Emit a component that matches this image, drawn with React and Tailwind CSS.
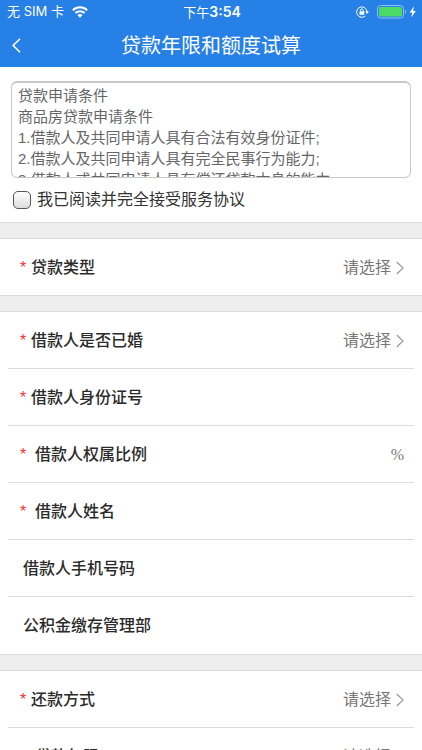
import React, { useState } from "react";

const TERMS = `贷款申请条件
商品房贷款申请条件
1.借款人及共同申请人具有合法有效身份证件;
2.借款人及共同申请人具有完全民事行为能力;
3.借款人或共同申请人具有偿还贷款本息的能力;`;

// kind: "select" | "text"
const SECTIONS = [
  [{ id: "loanType", label: "贷款类型", required: true, kind: "select" }],
  [
    { id: "married", label: "借款人是否已婚", required: true, kind: "select" },
    { id: "idNumber", label: "借款人身份证号", required: true, kind: "text" },
    { id: "share", label: "借款人权属比例", required: true, wide: true, kind: "text", unit: "%" },
    { id: "name", label: "借款人姓名", required: true, wide: true, kind: "text" },
    { id: "phone", label: "借款人手机号码", kind: "text" },
    { id: "office", label: "公积金缴存管理部", kind: "text" },
  ],
  [
    { id: "repayment", label: "还款方式", required: true, kind: "select" },
    { id: "years", label: "贷款年限", required: true, wide: true, kind: "select" },
  ],
];

function StatusBar() {
  return (
    <div className="flex h-6 items-center pr-[5px] pl-[7px] font-['Inter','Noto_Sans_CJK_SC',sans-serif] text-[13px]">
      <div className="flex flex-1 items-center gap-2">
        <span>无 SIM 卡</span>
        <svg width="16" height="12" viewBox="0 0 16 12" fill="none" stroke="currentColor" strokeWidth="2">
          <path d="M0.8 4.3a10.3 10.3 0 0 1 14.4 0" />
          <path d="M3.4 7a6.6 6.6 0 0 1 9.2 0" />
          <path d="M8 11.8 5.4 9.1a3.8 3.8 0 0 1 5.2 0z" fill="currentColor" stroke="none" />
        </svg>
      </div>
      <span>
        下午<span className="text-sm font-semibold">3:54</span>
      </span>
      <div className="flex flex-1 items-center justify-end gap-2">
        {/* rotation lock */}
        <svg width="13" height="12" viewBox="0 0 13 12" fill="none" stroke="currentColor">
          <path d="M9.3 10A5.2 5.2 0 1 1 11 5.4" />
          <path d="M9.2 5.3h3.7L11 8z" fill="currentColor" stroke="none" />
          <rect x="3.5" y="5.2" width="4.8" height="3.6" rx="0.5" fill="currentColor" stroke="none" />
          <path d="M4.5 5.5V4.4a1.4 1.4 0 0 1 2.8 0v1.1" />
        </svg>
        {/* battery + charging bolt */}
        <svg width="40" height="14" viewBox="0 0 40 14">
          <rect x="0.5" y="0.5" width="26" height="12.5" rx="3" fill="none" stroke="#8fc0f5" />
          <rect x="2" y="2" width="23" height="9.5" rx="1.5" fill="#4cd964" />
          <path d="M28 4.8v4a2.3 2.3 0 0 0 0-4z" fill="#8fc0f5" />
          <path d="M37 1.2 32.6 7.6h2.6l-1 4.9L38.8 6h-2.7z" fill="#fff" />
        </svg>
      </div>
    </div>
  );
}

function Chevron() {
  return (
    <svg width="8" height="14" viewBox="0 0 8 14" fill="none" stroke="#999" strokeWidth="1.2">
      <path d="M0.8 1 7 7 0.8 13" />
    </svg>
  );
}

function Field({ field }) {
  const { id, label, required, wide, kind, unit } = field;
  return (
    <div className="mx-2 flex h-[57px] items-center border-b border-[#dcdcdc] pt-0.5 pr-2.5 pl-3 last:border-transparent only:h-14">
      <label htmlFor={id} className="flex shrink-0 items-center font-medium text-[#2b2b2b]">
        <span className={wide ? "w-[15px] text-[#f03434]" : required ? "w-[11px] text-[#f03434]" : "w-[3px]"}>
          {required && "*"}
        </span>
        {label}
      </label>
      {kind === "select" ? (
        <div className="flex flex-1 items-center justify-end gap-1">
          <select id={id} className="appearance-none bg-transparent text-[#777] outline-none">
            <option>请选择</option>
          </select>
          <Chevron />
        </div>
      ) : (
        <input id={id} type="text" className="min-w-0 flex-1 bg-transparent px-2 text-right text-[#777] outline-none" />
      )}
      {unit && <span className="font-['Liberation_Serif',serif] text-[#777]">{unit}</span>}
    </div>
  );
}

export default function App() {
  const [agreed, setAgreed] = useState(false);

  return (
    <div className="flex h-screen flex-col overflow-hidden bg-white font-['Liberation_Sans','Noto_Sans_CJK_SC',sans-serif] text-base">
      <header className="shrink-0 bg-[#2780e6] text-white">
        <StatusBar />
        <div className="flex h-[43px] items-center px-3">
          <button type="button" aria-label="返回" className="w-6">
            <svg width="9" height="15" viewBox="0 0 9 15" fill="none" stroke="currentColor" strokeWidth="1.6">
              <path d="M8 0.8 1.2 7.5 8 14.2" />
            </svg>
          </button>
          <h1 className="flex-1 text-center text-xl">贷款年限和额度试算</h1>
          <span className="w-6" />
        </div>
      </header>

      <main className="flex-1 overflow-y-auto [scrollbar-width:none]">
        <div className="px-[11px] pt-[14px] pb-3">
          <textarea
            readOnly
            aria-label="贷款申请条件"
            value={TERMS}
            className="block h-[97px] w-full resize-none overflow-hidden rounded-md border border-t-2 border-[#c8c8c8] px-1.5 py-0.5 text-[15px] leading-[21px] text-[#666] outline-none"
          />
          <label className="mt-3 flex items-center gap-1.5 pl-0.5 leading-5 text-[#333]">
            <input
              type="checkbox"
              checked={agreed}
              onChange={(e) => setAgreed(e.target.checked)}
              className="size-[18px] appearance-none rounded-[5px] border border-[#555] bg-linear-to-b from-white to-[#dcdcdc] checked:from-[#2780e6] checked:to-[#2780e6]"
            />
            我已阅读并完全接受服务协议
          </label>
        </div>

        {SECTIONS.map((fields) => (
          <section key={fields[0].id}>
            <div className="h-[17px] border-y border-[#dcdcdc] bg-[#eee]" />
            <div>
              {fields.map((f) => (
                <Field key={f.id} field={f} />
              ))}
            </div>
          </section>
        ))}
      </main>
    </div>
  );
}
